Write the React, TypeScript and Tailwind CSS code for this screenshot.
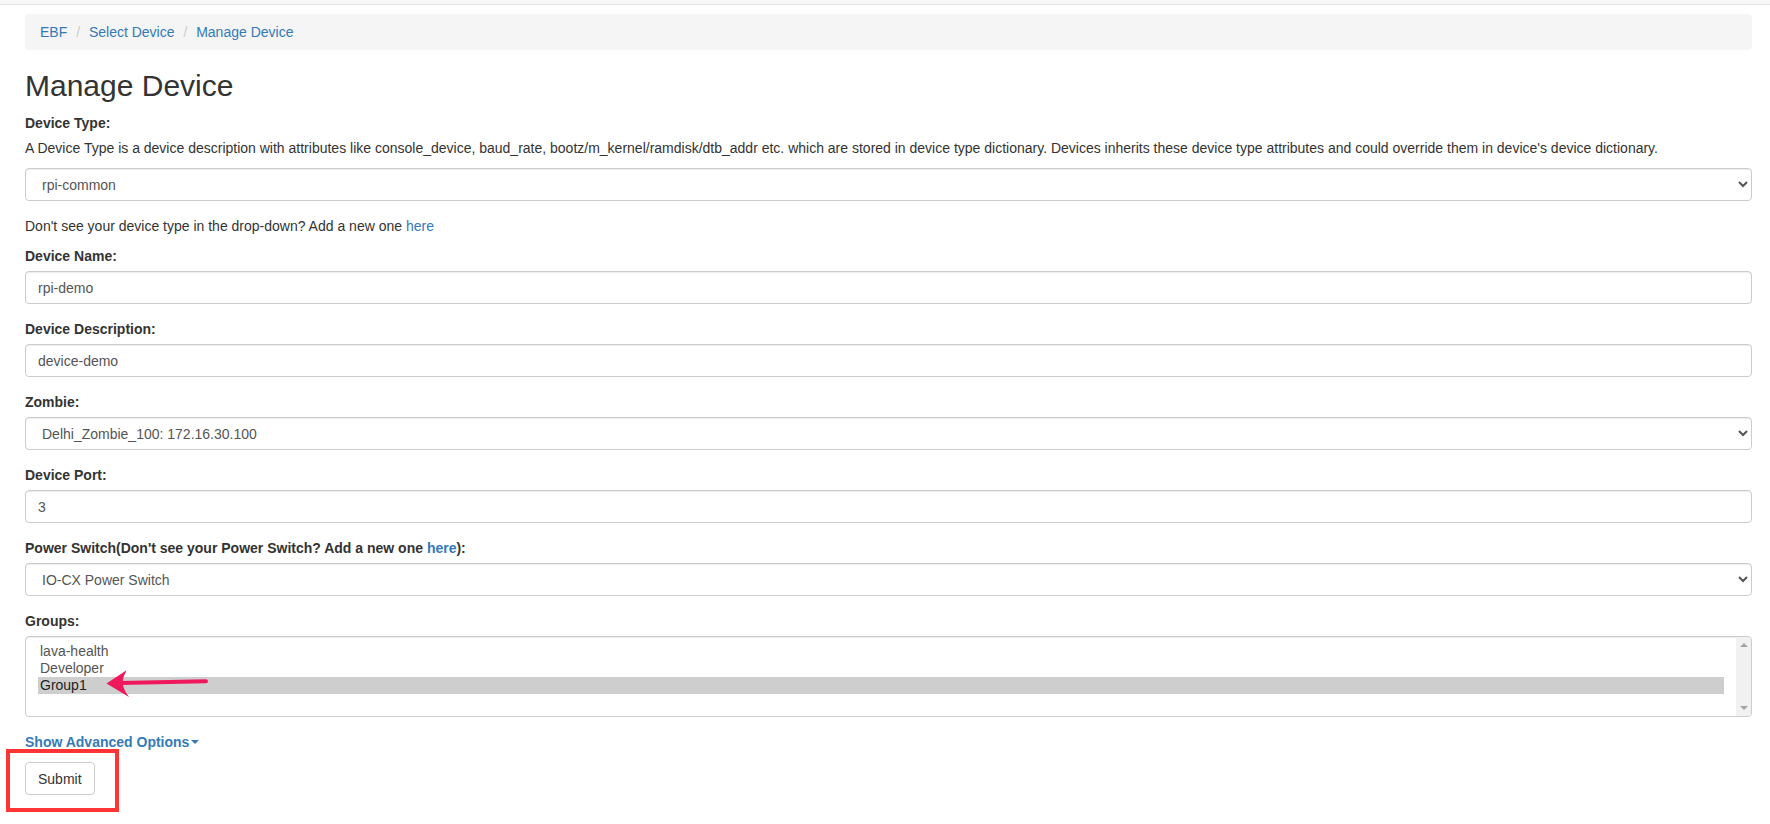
import React from "react";

const inputCls =
  "block w-full h-[33px] rounded-[4px] border border-[#ccc] bg-white px-[12px] text-[14px] text-[#555] shadow-[inset_0_1px_1px_rgba(0,0,0,0.075)] outline-none";

const Label: React.FC<{ children: React.ReactNode; className?: string }> = ({
  children,
  className = "mt-[15px]",
}) => (
  <label className={`block font-bold text-[14px] leading-[20px] text-[#333] ${className}`}>
    {children}
  </label>
);

const groups = ["lava-health", "Developer", "Group1"];

export default function App() {
  return (
    <div
      className="relative min-h-[824px] bg-white text-[14px] leading-[20px] text-[#333]"
      style={{ fontFamily: '"Liberation Sans", Arial, Helvetica, sans-serif' }}
    >
      {/* bottom of navbar */}
      <div className="h-[5px] bg-[#f8f8f8] border-b border-[#e5e5e5]" />

      <div className="flex flex-col pl-[25px] pr-[18px]">
        {/* breadcrumb */}
        <div className="mt-[9px] rounded-[4px] bg-[#f5f5f5] px-[15px] py-[8px]">
          <a className="text-[#337ab7]">EBF</a>{" "}
          <span className="px-[5px] text-[#ccc]">/{"\u00a0"}</span>
          <a className="text-[#337ab7]">Select Device</a>{" "}
          <span className="px-[5px] text-[#ccc]">/{"\u00a0"}</span>
          <a className="text-[#337ab7]">Manage Device</a>
        </div>

        <h2 className="mt-[19px] text-[30px] leading-[33px] font-normal text-[#333]">
          Manage Device
        </h2>

        <Label className="mt-[11px]">Device Type:</Label>
        <p className="mt-[5px]">
          A Device Type is a device description with attributes like console_device, baud_rate,
          bootz/m_kernel/ramdisk/dtb_addr etc. which are stored in device type dictionary. Devices
          inherits these device type attributes and could override them in device's device
          dictionary.
        </p>
        <select className={`${inputCls} mt-[10px]`} defaultValue="rpi-common">
          <option>rpi-common</option>
        </select>
        <p className="mt-[15px]">
          Don't see your device type in the drop-down? Add a new one{" "}
          <a className="text-[#337ab7]">here</a>
        </p>

        <Label className="mt-[10px]">Device Name:</Label>
        <input className={`${inputCls} mt-[5px]`} defaultValue="rpi-demo" />

        <Label>Device Description:</Label>
        <input className={`${inputCls} mt-[5px]`} defaultValue="device-demo" />

        <Label>Zombie:</Label>
        <select className={`${inputCls} mt-[5px]`} defaultValue="z">
          <option value="z">Delhi_Zombie_100: 172.16.30.100</option>
        </select>

        <Label>Device Port:</Label>
        <input className={`${inputCls} mt-[5px]`} defaultValue="3" />

        <Label>
          Power Switch(Don't see your Power Switch? Add a new one{" "}
          <a className="text-[#337ab7]">here</a>):
        </Label>
        <select className={`${inputCls} mt-[5px]`} defaultValue="io">
          <option value="io">IO-CX Power Switch</option>
        </select>

        <Label>Groups:</Label>
        <div className="mt-[5px] flex h-[81px] rounded-[4px] border border-[#ccc] bg-white shadow-[inset_0_1px_1px_rgba(0,0,0,0.075)]">
          <div className="flex-1 pl-[12px] pr-[12px] pt-[6px]">
            {groups.map((g) => (
              <div
                key={g}
                className={`h-[17px] px-[2px] pb-[1px] text-[14px] leading-[16px] ${
                  g === "Group1" ? "bg-[#cecece] text-[#222]" : "text-[#555]"
                }`}
              >
                {g}
              </div>
            ))}
          </div>
          {/* scrollbar */}
          <div className="flex w-[15px] flex-col items-center justify-between bg-[#f1f1f1] py-[6px] rounded-r-[3px]">
            <div className="h-0 w-0 border-x-[4px] border-b-[4px] border-x-transparent border-b-[#a3a3a3]" />
            <div className="h-0 w-0 border-x-[4px] border-t-[4px] border-x-transparent border-t-[#a3a3a3]" />
          </div>
        </div>

        <div className="mt-[15px] flex items-center">
          <a className="font-bold text-[#337ab7]">Show Advanced Options</a>
          <span className="ml-[2px] h-0 w-0 border-x-[4px] border-t-[4px] border-x-transparent border-t-[#337ab7]" />
        </div>

        <div className="mt-[10px]">
          <button className="h-[33px] rounded-[4px] border border-[#ccc] bg-white px-[12px] text-[14px] text-[#333]">
            Submit
          </button>
        </div>
      </div>

      {/* annotation: red box round Submit */}
      <div className="absolute left-[6px] top-[749px] h-[63px] w-[113px] border-[4px] border-[#ff3535]" />

      {/* annotation: arrow pointing at Group1 */}
      <svg
        className="absolute left-[100px] top-[665px]"
        width="115"
        height="40"
        viewBox="100 665 115 40"
      >
        <path d="M120 682.9 L206 681.3" stroke="#f0185c" strokeWidth="4" strokeLinecap="round" fill="none" />
        <path
          d="M106.5 683.6 L126.5 670.2 Q123 676.5 122.5 682.7 Q123.3 689.5 129 697 Z"
          fill="#f0185c"
        />
      </svg>
    </div>
  );
}
